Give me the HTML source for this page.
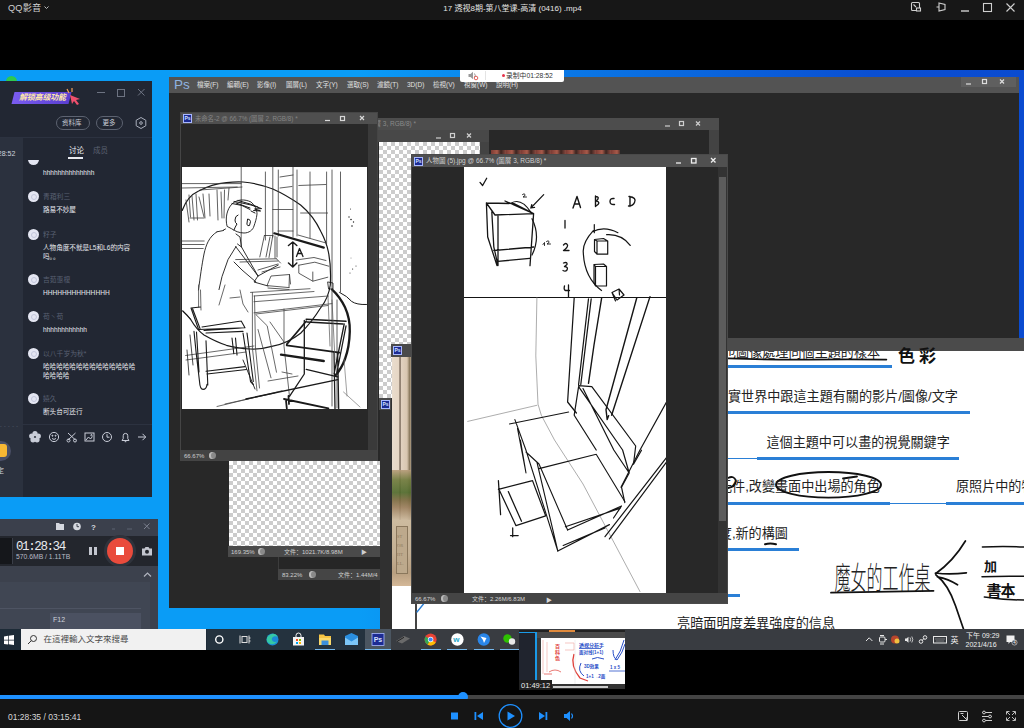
<!DOCTYPE html>
<html lang="zh">
<head>
<meta charset="utf-8">
<title>QQ影音</title>
<style>
html,body{margin:0;padding:0;background:#000;}
body{width:1024px;height:728px;overflow:hidden;position:relative;font-family:"Liberation Sans","Noto Sans CJK SC",sans-serif;}
.a{position:absolute;}
.t{position:absolute;white-space:nowrap;line-height:1;}
#top{left:0;top:0;width:1024px;height:20px;background:#171717;}
#video{left:0;top:70px;width:1024px;height:580px;background:linear-gradient(90deg,#0a9cf6 0%,#0a9cf6 35%,#0a78e6 55%,#0a4fd2 85%,#0a4bd0 100%);overflow:hidden;}
#bottom{left:0;top:699px;width:1024px;height:29px;background:#151515;}
.chk{background-color:#fff;background-image:linear-gradient(45deg,#ccc 25%,transparent 25%,transparent 75%,#ccc 75%),linear-gradient(45deg,#ccc 25%,transparent 25%,transparent 75%,#ccc 75%);background-size:8px 8px;background-position:0 0,4px 4px;}

#chat .msg{left:43px;font-size:6.600px;color:#e6e8ee;}
#chat .nm{left:43px;font-size:6.800px;color:#596072;}
#chat .av{position:absolute;left:28px;width:11px;height:11px;border-radius:50%;background:#e4e6f2;}
#chat .av:after{content:"";position:absolute;left:3px;top:3px;width:4px;height:4px;border-radius:50%;border:0.600px solid #c3c6dc;}

#ps .menu{top:5px;font-size:6.500px;color:#e0e0e0;}

#ps .sb{font-size:6px;color:#cfcfcf;}
#ps .ic{width:7px;height:7px;border-radius:50%;background:#8a8a8a;box-shadow:inset 2px 0 0 #bbb;}

.psi{position:absolute;width:9px;height:9px;background:#1c2b93;border:.6px solid #a9b8ff;box-sizing:border-box;}
.psit{font-size:5px;color:#d4e0ff;font-weight:bold;font-family:"Liberation Sans",sans-serif;}
#d4 .sb2{font-size:6px;color:#d6d6d6;}
#mm .bl{height:3px;background:#2a7fd6;}
</style>
</head>
<body>
<!-- ===== top bar ===== -->
<div id="top" class="a">
  <div class="t" style="left:8px;top:3.500px;font-size:9.200px;color:#d0d0d0;letter-spacing:0.2px;">QQ影音</div>
  <svg class="a" style="left:42.500px;top:5px" width="8" height="6"><path d="M1.500 1.500 L3.500 3.500 L5.500 1.500" fill="none" stroke="#bbb" stroke-width="1"/></svg>
  <div class="t" style="left:443px;top:4.500px;font-size:8px;color:#e4e4e4;width:139px;text-align:center;">17 透视8期-第八堂课-高清 (0416) .mp4</div>
  <svg class="a" style="left:909px;top:0" width="115" height="20" fill="none" stroke="#cfcfcf" stroke-width="1.1">
    <rect x="2.5" y="2.5" width="8" height="8" rx="1"/><rect x="7.5" y="8" width="4" height="3" fill="#1a1a1a"/><path d="M4.5 4.5l2.5 2.5"/>
    <path d="M30 3l6 1.5v5l-6 1.5z M27.5 7h2.5"/>
    <path d="M52 11h8" stroke-width="1.4"/>
    <rect x="74.500" y="3.500" width="8" height="8"/>
    <path d="M97.500 3.500l8 8M105.500 3.500l-8 8"/>
  </svg>
</div>

<!-- ===== video frame ===== -->
<div id="video" class="a">

  <!-- green icon peeking -->
  <div class="a" style="left:6px;top:6px;width:11px;height:11px;border-radius:50%;background:#2fc94e;"></div>
  <!-- ===== chat window ===== -->
  <div class="a" id="chat" style="left:0;top:11px;width:152px;height:416px;background:#222733;overflow:hidden;font-family:'Liberation Sans','Noto Sans CJK SC',sans-serif;">
    <div class="a" style="left:0;top:56px;width:152px;height:1px;background:#2c3240;"></div>
    <div class="a" style="left:0;top:57px;width:23px;height:359px;background:#2b313e;"></div>
    <!-- banner -->
    <div class="a" style="left:13px;top:11px;width:57px;height:12px;background:linear-gradient(90deg,#7a5cf0,#5a3fd0);transform:skewX(-14deg);"></div>
    <div class="t" style="left:19px;top:13px;font-size:8px;font-weight:bold;font-style:italic;color:#ffe9a8;letter-spacing:-0.2px;">解锁高级功能</div>
    <svg class="a" style="left:64px;top:6px" width="18" height="18"><path d="M3 2l2 4M8 1l0 4" stroke="#f5a05a" stroke-width="1.2"/><path d="M6 8l10 4-4 1 3 4-2 1-3-4-2 3z" fill="#f0506e"/></svg>
    <!-- window controls -->
    <svg class="a" style="left:94px;top:4px" width="56" height="16" fill="none" stroke="#6d7382" stroke-width="1"><path d="M3 7.500h8"/><rect x="23.500" y="4.500" width="7" height="7"/><path d="M44 4l6.500 6.500M50.500 4l-6.500 6.500"/></svg>
    <!-- buttons -->
    <div class="a" style="left:56px;top:35px;width:32px;height:12px;border:1px solid #5d6371;border-radius:7px;"></div>
    <div class="t" style="left:62px;top:39px;font-size:6.500px;color:#c8ccd6;">资料库</div>
    <div class="a" style="left:96px;top:35px;width:25px;height:12px;border:1px solid #5d6371;border-radius:7px;"></div>
    <div class="t" style="left:102.500px;top:39px;font-size:6.500px;color:#c8ccd6;">更多</div>
    <svg class="a" style="left:134px;top:35px" width="14" height="14" fill="none" stroke="#a9aebb" stroke-width="1"><path d="M7 1.500l4.800 2.750v5.500L7 12.500 2.200 9.750v-5.500z"/><circle cx="7" cy="7" r="1.300"/></svg>
    <!-- left col -->
    <div class="t" style="left:-8px;top:69px;font-size:7px;color:#cfd3dc;">1:28:52</div>
    <!-- tabs -->
    <div class="t" style="left:69px;top:66px;font-size:7.500px;color:#eef0f4;">讨论</div>
    <div class="a" style="left:68px;top:76px;width:15px;height:1.500px;background:#e8eaf0;"></div>
    <div class="t" style="left:93px;top:66px;font-size:7.500px;color:#5c6272;">成员</div>
    <!-- messages -->
    <div class="a" style="left:28px;top:73px;width:11px;height:11px;border-radius:50%;background:#e4e6f2;clip-path:inset(6px 0 0 0);"></div>
    <div class="t msg" style="top:89px;">hhhhhhhhhhhhhh</div>

    <div class="av" style="top:110px;"></div><div class="t nm" style="top:113px;">青葙利三</div>
    <div class="t msg" style="top:126px;">路易不妙屋</div>

    <div class="av" style="top:148px;"></div><div class="t nm" style="top:151px;">籽子</div>
    <div class="t msg" style="top:164px;">人物角度不就是L5和L6的内容</div>
    <div class="t msg" style="top:173px;">吗。。</div>

    <div class="av" style="top:193px;"></div><div class="t nm" style="top:196px;">吉茹惠榎</div>
    <div class="t msg" style="top:209px;">HHHHHHHHHHHHHH</div>

    <div class="av" style="top:230px;"></div><div class="t nm" style="top:233px;">苟丶苟</div>
    <div class="t msg" style="top:246px;">hhhhhhhhhhhh</div>

    <div class="av" style="top:267px;"></div><div class="t nm" style="top:270px;">以八千岁为秋*</div>
    <div class="t msg" style="top:283px;">哈哈哈哈哈哈哈哈哈哈哈哈哈哈</div>
    <div class="t msg" style="top:292px;">哈哈哈哈</div>

    <div class="av" style="top:312px;"></div><div class="t nm" style="top:315px;">嬉久</div>
    <div class="t msg" style="top:328px;">断头台可还行</div>

    <div class="a" style="left:22px;top:343px;width:130px;height:1px;background:#2c3240;"></div>
    <!-- toolbar icons -->
    <svg class="a" style="left:26px;top:347px" width="124" height="18" fill="none" stroke="#c9cdd8" stroke-width="1">
      <g fill="#c9cdd8" stroke="none"><circle cx="9" cy="5.500" r="2.600"/><circle cx="5.700" cy="8" r="2.600"/><circle cx="12.300" cy="8" r="2.600"/><circle cx="7" cy="11.800" r="2.600"/><circle cx="11" cy="11.800" r="2.600"/></g>
      <circle cx="28" cy="9" r="4.600"/><path d="M26 10.500q2 1.800 4 0"/><circle cx="26.400" cy="7.700" r=".5" fill="#c9cdd8"/><circle cx="29.600" cy="7.700" r=".5" fill="#c9cdd8"/>
      <path d="M42 5l7.500 7M49.500 5l-7.500 7"/><circle cx="42.500" cy="12.500" r="1.500"/><circle cx="49" cy="12.500" r="1.500"/>
      <rect x="59" y="5" width="9" height="8"/><path d="M60 12l2.500-3 2 2 2-2.500"/><circle cx="65.500" cy="7.200" r=".7"/>
      <circle cx="81" cy="9" r="4.500"/><path d="M81 6.200v3h2.500"/>
      <path d="M96 12.500h7l-1.200-1.800v-3a2.300 2.300 0 0 0-4.600 0v3z M98.700 13.700h1.600"/>
      <path d="M112 9h7.500M116.500 5.800l3.200 3.200-3.200 3.200"/>
    </svg>
    <!-- left bottom -->
    <div class="t" style="left:0;top:343px;font-size:5px;color:#5c6272;letter-spacing:.5px;">- - - - -</div>
    <div class="a" style="left:-9px;top:360px;width:20px;height:20px;border-radius:50%;background:#4a4f66;"></div>
    <div class="a" style="left:-2px;top:363px;width:9px;height:13px;border-radius:3px;background:#f7b733;"></div>
    <div class="t" style="left:-3px;top:386px;font-size:7px;color:#cfd3dc;">定</div>
  </div>


  <!-- ===== Photoshop main window ===== -->
  <div class="a" id="ps" style="left:169px;top:7px;width:850px;height:531px;background:#282828;font-family:'Liberation Sans','Noto Sans CJK TC',sans-serif;">
    <div class="a" style="left:0;top:0;width:850px;height:16px;background:#535353;"></div>
    <div class="t" style="left:5px;top:1px;font-size:13.500px;color:#8fb3e0;letter-spacing:0px;">Ps</div>
    <div class="t menu" style="left:28px;">檔案(F)</div>
    <div class="t menu" style="left:58px;">編輯(E)</div>
    <div class="t menu" style="left:88px;">影像(I)</div>
    <div class="t menu" style="left:117px;">圖層(L)</div>
    <div class="t menu" style="left:147px;">文字(Y)</div>
    <div class="t menu" style="left:178px;">選取(S)</div>
    <div class="t menu" style="left:208px;">濾鏡(T)</div>
    <div class="t menu" style="left:238px;">3D(D)</div>
    <div class="t menu" style="left:264px;">檢視(V)</div>
    <div class="t menu" style="left:295px;">視窗(W)</div>
    <div class="t menu" style="left:327px;">說明(H)</div>
    <div class="a" style="left:792px;top:0;width:55px;height:10px;background:#5f5f5f;"></div>
    <svg class="a" style="left:792px;top:0" width="55" height="10" fill="none" stroke="#ddd" stroke-width="1.200"><path d="M5 7h5"/><rect x="21.500" y="2.500" width="4" height="4"/><path d="M39 2.500l4 4M43 2.500l-4 4"/></svg>

    <!-- doc 2 (behind, wide) -->
    <div class="a" style="left:209px;top:41px;width:341px;height:12px;background:#4d4d4d;"></div>
    <div class="t" style="left:205.500px;top:44px;font-size:6.500px;color:#8a8a8a;">層 3, RGB/8) *</div>
    <div class="a" style="left:540px;top:53px;width:10px;height:30px;background:#434343;"></div>
    <svg class="a" style="left:492px;top:41px" width="50" height="12" fill="none" stroke="#cfcfcf" stroke-width="1.200"><path d="M4 8h5"/><rect x="18.500" y="3.500" width="4" height="4"/><path d="M35 3.500l4 4M39 3.500l-4 4"/></svg>
    <div class="a" style="left:322px;top:73px;width:129px;height:5px;background:repeating-linear-gradient(90deg,#7a3b34 0,#a85a4a 6px,#3a2420 10px,#8a4a40 15px);"></div>
    <!-- doc 3 (behind, small, checkerboard) -->
    <div class="a" style="left:209px;top:53px;width:111px;height:12px;background:#484848;"></div>
    <svg class="a" style="left:263px;top:53px" width="50" height="12" fill="none" stroke="#cfcfcf" stroke-width="1.200"><path d="M4 8h5"/><rect x="18.500" y="3.500" width="4" height="4"/><path d="M35 3.500l4 4M39 3.500l-4 4"/></svg>
    <div class="a chk" style="left:210px;top:65px;width:101px;height:256px;"></div>
    <div class="a" style="left:311px;top:65px;width:9px;height:20px;background:#434343;"></div>
    <!-- checkerboard below doc1 + status bars -->
    <div class="a chk" style="left:60px;top:384px;width:151px;height:85px;"></div>
    <div class="a" style="left:59px;top:469px;width:152px;height:11px;background:#4a4a4a;"></div>
    <div class="t sb" style="left:62px;top:472px;">169.35%</div>
    <div class="a ic" style="left:89px;top:471px;"></div>
    <div class="t sb" style="left:115px;top:472px;">文件：1021.7K/8.98M</div>
    <div class="t sb" style="left:192px;top:472px;font-size:6px;">▶</div>
    <div class="a" style="left:109px;top:480px;width:102px;height:13px;background:#262626;border-left:1px solid #3c3c3c;"></div>
    <div class="a" style="left:109px;top:492px;width:102px;height:11px;background:#454545;"></div>
    <div class="t sb" style="left:113px;top:495px;">83.22%</div>
    <div class="a ic" style="left:140px;top:494px;"></div>
    <div class="t sb" style="left:169px;top:495px;">文件：1.44M/4</div>
    <!-- doc 1 -->
    <div class="a" id="d1" style="left:11px;top:35px;width:198px;height:349px;background:#282828;border:1px solid #454545;box-sizing:border-box;overflow:hidden;">
      <div class="a" style="left:0;top:0;width:198px;height:11px;background:#4f4f4f;"></div>
      <div class="a psi" style="left:2px;top:1px;"></div><div class="t psit" style="left:3.500px;top:3px;">Ps</div>
      <div class="t" style="left:14px;top:3px;font-size:6.300px;color:#858585;">未命名-2 @ 66.7% (圖層 2, RGB/8) *</div>
      <svg class="a" style="left:140px;top:0" width="50" height="11" fill="none" stroke="#d8d8d8" stroke-width="1.200"><path d="M4 7.500h5"/><rect x="19.500" y="3.500" width="4" height="4"/><path d="M39 3l4 4M43 3l-4 4"/></svg>
      <div class="a" style="left:187px;top:11px;width:10px;height:326px;background:#3a3a3a;"></div>
      <div class="a" style="left:0;top:337px;width:198px;height:11px;background:#434343;"></div>
      <div class="t sb" style="left:3px;top:340px;">66.67%</div>
      <div class="a ic" style="left:28px;top:339px;"></div>
      <svg class="a" id="sk1" style="left:1px;top:54px;" width="185" height="242" viewBox="182 167 185 242"><rect x="182" y="167" width="185" height="242" fill="#fff"/>
<g fill="none" stroke="#1a1a1a" stroke-width=".9" stroke-linecap="round" stroke-linejoin="round">
<!-- big circle -->
<path d="M182.200 210.500C186 200 192 194 198.600 191 208 186 217 183.500 226.400 182.600 232 182 238 181.800 243 182 254 183 264 185.500 272.800 189 283 193.500 292 199 300.600 205 309 212 316 221 321 231.800 324.500 238.500 327 245 328.400 252 330.500 262 331 272 330.300 285 329 294 326 301 321 307.300 315 317 308 326 300.600 333.200 292 340 283 344 272.800 346.200 265 348.500 258 349.300 250.500 349 242 348.500 234 347.500 226.400 345.300 218 342.500 211 339 204 335 198.500 331 194.500 326 191 320 188 316 185 313 182.800 311" stroke-width="1.200"/>
<!-- thick arc right -->
<path d="M332.200 289.600C338 295 342 301 345 307.300 348.500 315 350 323 349.800 331.400 349.500 342 348 351 345 359 342.500 366 339 371.500 335 376" stroke-width="2.300"/>
<path d="M339.600 292.400q8 4 12 9 5 3.500 14.900 3.100" stroke-width="1"/>
<!-- shelves / window frames -->
<g stroke="#3a3a3a" stroke-width=".8">
<path d="M241.200 167v79M265.400 172v68M272.800 167v70M278.300 170v66M293 167v70M297 170v66M310 172v66M326.600 172v72M332 170v236M340.500 172v120M337 300v108"/>
<path d="M280 177l13-2M280 188l12-1.500M298.800 185.500l27-1M272.800 209.500h20M300.600 213h27M278 231h15M298 235l28 8"/>
<path d="M182.200 183.600h59M182.200 188l55-1M200 190l42-3M182.200 241h22M182.200 244.500h22M182.200 248.500h21"/>
<path d="M189 195l1.500 22M192 196l2 24M196 194l1.500 26M199 197l5 20M203 194l2 24M209 194l1 22M217 190l1 30M221 192l1 26M224.500 190l-.5 28M229 188l-1 12M190 218h14M186 200l3 22"/>
</g>
<!-- person -->
<path d="M227 226c-2-8 0-17 5-22 5-5 13-5 19-2 4 3 6 8 6 12-.5 5-2 9-3 12-1 4-5 7-10 7-5 0-9-2-12-4z"/>
<path d="M234 201.500l8 1.500 9 2 10.600 3.600-7 .4 6 2-7-.5M232 203.500l10 2 8 4M251 211l4 2M238 200.500l12 3.500 8 3M236 203l14 5" stroke-width="1"/>
<path d="M238 215q-3 1-3 5 0 3 2 4-2 3-3 6M248 219q2 0 2.500 2.500l-1 4q-2 1-2.500-1z" stroke-width="1"/>
<path d="M225.500 229l-2 1M236 234l4 3 1.500 10 16.500 29 20.300-11M241.500 247l-4-3M217 231.800c-8 5-11 13-13 22.200-2 10-4 24-5.500 36M223.500 230.500l-6.500 1.300M236 246.600l-8 13-6 17-3 13M235.700 246.600l22.300 29.400M258 276l-4 6 14 4M234 262l8 8 14 12" />
<!-- thick line + arrow + A -->
<path d="M274.300 233.300l49.500 14.300" stroke-width="2.200"/>
<path d="M292.800 242.500v24M288.500 245.500l4.300-3.500 4 3.500M288.500 263l4.300 4 4-4" stroke-width="1.500"/>
<path d="M296.500 256.500l3-8 3.500 8M297.500 253.500h4.500" stroke-width="1.300"/>
<!-- desk items -->
<g stroke="#333" stroke-width=".8">
<path d="M264.400 235.500l-4.600 21.400M272.800 235.500l-3.800 22M264.400 235.500h8.400M270 237l-4 20M275 236v22M277 237v20"/>
<path d="M235.700 259.600l40.800-.8M240 262l38-1M276.500 258.800l4 4.200M258 270l20-6M262 272l18-5"/>
<path d="M267 285.600l4-9.600 18.500-1.500 1 9.500M267 285.600l22 2M268 288l21 1.500M289.500 274.500l-.5 13"/>
<path d="M298.800 265.200l16-3 14 4M298.800 265.200v8l14 8 15-4M312.800 272v9M296 260l18-2.500 12 3"/>
<path d="M328 282l5 1v6h-4z" stroke="#111"/>
</g>
<g fill="#222" stroke="none"><circle cx="349" cy="217" r=".7"/><circle cx="351" cy="219.500" r=".8"/><circle cx="353.500" cy="222" r=".7"/><circle cx="352" cy="226" r=".8"/><circle cx="350.500" cy="209" r=".5"/><circle cx="352.600" cy="269" r=".6"/><circle cx="350" cy="273" r=".5"/><circle cx="356" cy="266" r=".5"/><circle cx="351" cy="258" r=".4"/></g>
<!-- table -->
<g stroke="#444" stroke-width=".8">
<path d="M250.500 292.400l59.500-3.700M254 296l60-4.500M254 301.700l74.400-5.700M254 312.800l78-9.200M256 314l72-8.500"/>
<path d="M252.400 292.400v55.600l4.600 42.800M254.500 296l1 52 4 40M284 309v37.200l5.500 50.100M198.600 285v22M200.500 290l.5 20"/>
<path d="M256 314.700l11.200 11.100 9.300 46.400M258 329.500l13 48.300M270 322l14 20M225 285l-6 20M240 290l3 14 5 8M230 298l10-1"/>
<path d="M185.600 355.500l68.400-9.500M186 360l60-8M217 406.500l65-15.700M225 404l50-11M268 381l30-5M282 372l10 2"/>
</g>
<!-- left chair -->
<g stroke-width="1.100">
<path d="M191 308l9.400-1M191 308l7.600 21.500M192.500 308.500l7.500 20M198.600 329.500l46.400-1.800M202 327l39.200-6M241.200 321l3.800 6.700M206 333l37-1.600M204 330.500l38-2.500"/>
<path d="M194 331.400l2 20 3.500 30q.5 8 3.500 8 3.500 0 4-5M206 340.700l1.800 44.300M196.500 332l2.500 40M243 333l7.500 48.500 2.800 3M247 333l6.300 48.500M232 338l1.800 15.700M235.500 338l1.500 17"/>
<path d="M206 371.300l39-4.700M207 374l39.500-4.500"/>
<path d="M182.800 311l8 8M190 335l3 30M187 350l2 25" stroke-width=".8"/>
<path d="M243 360l12 29" stroke-width=".9"/>
</g>
<!-- right chair -->
<g stroke-width="1.500">
<path d="M306.200 319.300l39.800 1.900M307 322l36 2" stroke-width="1.600"/>
<path d="M306.200 321.200l-19.500 23.200M286.700 345.300l52.900 7.400" stroke-width="1.700"/>
<path d="M281 354.600l42.800 6.400" stroke-width="2.300"/>
<path d="M304.300 320.300v53.700M306.200 369.400l31.500 7.500M304.300 374l-14.800 22.300" stroke-width="1.300"/>
<path d="M284 399l44.400 9.400M286 400.500l.8 7.900M288.500 396l.5 8" stroke-width="1.800"/>
<path d="M334 351.800l1 56.600M337.700 353.500l1 54.900M344.200 324l-10.200 50M346 326l-9 46" stroke-width="1.300"/>
<path d="M245.900 399l91.800-19.400" stroke-width="1.400"/>
<path d="M332 300l3 60M328 296l2 50" stroke-width=".7" stroke="#555"/>
<path d="M344 359l3 37M343.500 392l16.500 15" stroke-width=".7" stroke="#777"/>
</g>
</g></svg>
    </div>
  </div>

  <!-- ===== misc strips right of PS lower-left area ===== -->
  <div class="a" style="left:380px;top:328px;width:12px;height:231px;background:#303030;"></div>
  <div class="a" style="left:379px;top:328px;width:12px;height:12px;background:#4a4a4a;"></div>
  <div class="a psi" style="left:381px;top:330px;"></div><div class="t psit" style="left:382.500px;top:332px;">Ps</div>
  <!-- photo doc -->
  <div class="a" style="left:391px;top:274px;width:21px;height:13px;background:#4a4a4a;"></div>
  <div class="a psi" style="left:393px;top:276px;"></div><div class="t psit" style="left:394.500px;top:278px;">Ps</div>
  <div class="a" style="left:392px;top:287px;width:20px;height:229px;background:linear-gradient(90deg,#e9dccd 0,#e6d6c4 35%,#5a4a3c 40%,#e2d2c0 46%,#d8c6b0 75%,#8b7a5e 88%,#cdbba4 100%);"></div>
  <div class="a" style="left:392px;top:400px;width:20px;height:50px;background:linear-gradient(180deg,#b79c7a 0,#6e7a3c 20%,#4f6a2c 45%,#7a6a40 60%,#9b7f5d 75%,#cbb89c 100%);opacity:.9;"></div>
  <div class="a" style="left:392px;top:450px;width:20px;height:66px;background:linear-gradient(180deg,#cdbb9f 0,#c4b094 50%,#b89f80 80%,#d4b898 100%);"></div>
  <div class="a" style="left:396px;top:456px;width:12px;height:48px;background:#bda98c;border:1px solid #8a775c;box-sizing:border-box;"></div>
  <div class="a" style="left:392px;top:516px;width:20px;height:43px;background:#fff;"></div>
  <div class="t" style="left:397px;top:462px;font-size:4.500px;line-height:9px;color:#8f7b60;font-family:'Liberation Serif',serif;white-space:pre;">ST
OR
HT
LL.</div>
  <!-- ===== white mind map ===== -->
  <div class="a" id="mm" style="left:412px;top:268px;width:612px;height:291px;overflow:hidden;font-family:'Liberation Sans','Noto Sans CJK TC',sans-serif;color:#222;">
    <div class="a" style="left:0;top:266px;width:316px;height:25px;background:#fff;"></div>
    <div class="a" style="left:316px;top:13px;width:296px;height:278px;background:#fff;"></div>
    <div class="a" style="left:3px;top:266px;width:1.500px;height:25px;background:#444;"></div>
    <!-- row1 -->
    <div class="t" style="left:311px;top:7.500px;font-size:13.100px;">也圖像處理同個主題的樣本</div>
    <div class="a" style="left:316px;top:0;width:296px;height:13.400px;background:#4b4b4b;"></div>
    <div class="a bl" style="left:316px;top:27px;width:164px;"></div>
    <!-- row2 -->
    <div class="t" style="left:316px;top:51.500px;font-size:13.100px;">實世界中跟這主題有關的影片/圖像/文字</div>
    <div class="a bl" style="left:316px;top:72.500px;width:242px;"></div>
    <!-- row3 -->
    <div class="t" style="left:354.500px;top:97.500px;font-size:13.100px;">這個主題中可以畫的視覺關鍵字</div>
    <div class="a bl" style="left:345px;top:118.500px;width:202px;"></div>
    <div class="a" style="left:316px;top:119.500px;width:30px;height:1px;background:#2a7fd6;"></div>
    <!-- row4 -->
    <div class="t" style="left:307px;top:142px;font-size:13.100px;">元件,改變畫面中出場的角色</div>
    <div class="t" style="left:544px;top:142px;font-size:13.100px;">原照片中的物件</div>
    <div class="a bl" style="left:316px;top:164px;width:162px;"></div>
    <div class="a" style="left:478px;top:165px;width:56px;height:1px;background:#2a7fd6;"></div>
    <div class="a bl" style="left:534px;top:164px;width:80px;"></div>
    <!-- row5 -->
    <div class="t" style="left:306.800px;top:189px;font-size:13.100px;">度,新的構圖</div>
    <div class="a bl" style="left:316px;top:210px;width:71px;"></div>
    <div class="a bl" style="left:316px;top:255.500px;width:12px;"></div>
    <!-- bottom row -->
    <div class="t" style="left:265px;top:279px;font-size:13.200px;">亮暗面明度差異強度的信息</div>
    <svg class="a" id="mmsvg" style="left:0;top:0" width="612" height="291" viewBox="412 338 612 291" fill="none" stroke="#111" stroke-linecap="round" stroke-linejoin="round" font-family="Liberation Sans,Noto Sans CJK TC,sans-serif">
      <path d="M728 358.400q40 1.500 80 1.200t78.400 0" stroke-width="1.700"/>
      <text x="898" y="362" font-size="17" font-weight="bold" fill="#111" stroke="none" transform="translate(0 0)" textLength="38">色彩</text>
      <path d="M423.500 604l-6.500 8" stroke="#2a7fd6" stroke-width="1.300"/>
      <ellipse cx="828.500" cy="484.800" rx="52.500" ry="12.800" stroke-width="1.900"/>
      <path d="M843 478.500l14-2M728 478q6-3 8 3-1 6-8 7" stroke-width="1.800"/>
      <path d="M765 544.300q5-1.500 11 0" stroke-width="2"/>
      <text x="0" y="0" font-size="16" font-weight="300" fill="#222" stroke="none" transform="translate(834.500 589) scale(1 1.900)" textLength="96">魔女的工作桌</text>
      <path d="M831 592.700q50-1 102.500-1.900" stroke-width="1.800"/>
      <path d="M965.400 541q-12 20-29.900 32.800M935.500 573q14 2 30.900-.2M937.500 576.800q11 2 20 8M936 575q12 9 19.500 30.700t7.900 23" stroke-width="1.700"/>
      <path d="M982.400 547q20-1 42 0M982 576.800q20-1 42-.5M984.300 597q20 3 40 3" stroke-width="1.500"/>
      <text x="984" y="571" font-size="13" font-weight="bold" fill="#111" stroke="none" textLength="20">加</text>
      <text x="986.500" y="596" font-size="15" font-weight="bold" fill="#111" stroke="none" textLength="29">書本</text>
    </svg>
  </div>
  <!-- ===== doc 4 ===== -->
  <div class="a" id="d4" style="left:411px;top:84px;width:317px;height:450px;background:#282828;border:1px solid #4a4a4a;box-sizing:border-box;overflow:hidden;font-family:'Liberation Sans','Noto Sans CJK TC',sans-serif;">
    <div class="a" style="left:0;top:0;width:317px;height:12px;background:#505050;"></div>
    <div class="a psi" style="left:2px;top:1.500px;"></div><div class="t psit" style="left:3.500px;top:3.500px;">Ps</div>
    <div class="t" style="left:14px;top:3px;font-size:6.500px;color:#d0d0d0;">人物圖 (5).jpg @ 66.7% (圖層 3, RGB/8) *</div>
    <svg class="a" style="left:260px;top:0" width="55" height="12" fill="none" stroke="#eee" stroke-width="1.300"><path d="M4 8h5"/><rect x="19.500" y="3.500" width="4.500" height="4.500"/><path d="M39 3l4.500 4.500M43.500 3l-4.500 4.500"/></svg>
    <div class="a" style="left:306px;top:12px;width:9px;height:427px;background:#333;"></div>
    <div class="a" style="left:307px;top:22px;width:7px;height:344px;background:#5c5c5c;"></div>
    <div class="a" style="left:0;top:438px;width:317px;height:11px;background:#454545;"></div>
    <div class="t sb2" style="left:3px;top:441px;">66.67%</div>
    <div class="a" style="left:29px;top:440px;width:7px;height:7px;border-radius:50%;background:#8a8a8a;box-shadow:inset 2px 0 0 #bbb;"></div>
    <div class="t sb2" style="left:60px;top:441px;">文件：2.26M/6.83M</div>
    <div class="t sb2" style="left:134px;top:441.500px;font-size:6px;">▶</div>
    <svg class="a" id="sk4" style="left:52px;top:12px;" width="202" height="426" viewBox="464 167 202 426"><rect x="464" y="167" width="202" height="426" fill="#fff"/>
<g fill="none" stroke="#151515" stroke-width="1.250" stroke-linecap="round" stroke-linejoin="round">
<path d="M480 182.400l2.600 3.100 4.100-7.200" stroke-width="1.300"/>
<path d="M486.400 203l27.600.6M486.400 203l1.300 34 9.300 28.500M486.400 203l8.600 12M495 215l38.600-1.400M491.800 211.800l2 35 4.200 18.700M498 215v50.500M505 201l28.600 12.600M514 203.600l19.600 10M533.600 213.600l-3.600 52M493.800 250.500l40-3.500M498 261.400l31.700-3.100" stroke-width="1.300"/>
<path d="M511.300 203q10-5.500 19.500 9.200M532 218.700q9 18 0 36.300M543.700 194.700l-12.900 13.300M530.800 208l1-3.500M530.800 208l3.800-.6" stroke-width="1.200"/>
<path d="M522.500 194.500q2-1.500 2.500 0t-2 2.500h3.500M543 244.500l1.500-2v3M546.500 241.500q2-1.500 2.500 0t-2 2.500h3.500" stroke-width=".9"/>
<path d="M573 208l4-11.500 3.500 11M574.500 204h5M595.500 196v10.500M595.500 196.500q5 0 1 4.500 5 1.500-.5 5M614 198.500q-4-.5-4 3t4.500 3M630 196.500v10M629 196.500q8 1 5.500 6-1.500 3.500-6 3.500" stroke-width="1.400"/>
<path d="M565 220.500v7.500M563.500 245q2.500-3 4 0 .5 2.500-4 5.500h5.500M563.500 263q4-1.500 3.500 1.500l-2.500 2q4 .5 2.500 3.500-1.500 2-4 .5M564.500 286q-1 4 1 4.500h4M568.500 285v12" stroke-width="1.300"/>
<path d="M597 241h10.700v13.200H597zM597 241l-2.500-1.500 9-1 4.200 2.500M594.500 239.500v12l2.500 2.700M595.500 266.500h11v19.500h-11zM595.500 266.500l-1.500-2 9.500-.5 3 2.500M594 264.500v18l1.500 3.500M612 292.500l7-3.500 5 6-7 5zM612 292.500l3.500 8.500M619 289l.5 6" stroke-width="1.200"/>
<path d="M593.300 230.600q-11 12-10 22 1 25 18.200 37.900M592.300 231.700q12-6 25.600 1M606.600 234.700q15-1 23.600 10.700M594.300 224.500v8.200" stroke-width="1.200"/>
<path d="M464 297.500h202" stroke-width="1"/>
<path d="M536.900 297.700l-1.100 58.200 2.200 48.300 3.300 11 13.200 24.800 28.500 44 57 107.600M467.700 421.400l69.200-16.100" stroke="#8a8a8a" stroke-width=".7"/>
<path d="M574.200 297.700l-6.600 104.300 8.800 11M588.500 298.800l-9.900 85.700M591.200 298.800l-10.400 85.700"/>
<path d="M601.700 297.700l-7.700 47.300-5.500 38.400M636.800 297.700l-30.800 112 1.200 9.900 1.500-4M650 296.600l-38.400 118.600" stroke-width="1.400"/>
<path d="M578.600 385.600l13.200 1.100M578.600 386.600l44 63.400 6.600 23M591.800 386.700l43.900 59.300M635.700 446l-2.200 18.200M583 388.600l30.800 61.400 15.400 23M578.600 386.600l-4.400 28.600 22 34.800M629.200 473l-7.700 14.200 3.300 15.400M633.500 464.200l8-14" stroke-width="1.200"/>
<path d="M509.400 424l59.300-12M514.900 419.600l11 30.400 31.900 101M517.500 428.400l8.500 44.600M520.400 440l5.600 33M526 452l13 12 28.600 66M536.900 462l20.900 89M539 468.600l57.200-14.300M596.200 454.300l28.600 47.200" stroke-width="1.100"/>
<path d="M567.600 530l53.900-24M565.400 526.800l55-18.700M557.800 551l51.600-26.400M563.200 545.500l41.800-17.600M621.500 506l-8 12" stroke-width="1.200"/>
<path d="M498.400 489.400l34.100-8.800M498.400 480.600l2.200 34.100M499.500 490.500l16.500 35.200M516 525.700l29.700-9.900M532.500 480.600l13.200 35.200M508.300 491.600l13.200 29.700M512.700 527.900v8.800M510.500 535.600h7.700"/>
<path d="M666.500 402l-26.500 48-19 37.200M666.500 457.600l-61.500 79.100M666.500 462l-57.100 76.900" stroke-width="1.200"/>
</g></svg>
  </div>
  <!-- recording badge -->
  <div class="a" style="left:460px;top:-1px;width:104px;height:13px;background:#fff;border-radius:0 0 2px 2px;"></div>
  <svg class="a" style="left:467px;top:0" width="14" height="11"><path d="M1.500 4h2l2.500-2.200v7.400L3.500 7h-2z" fill="#999"/><path d="M7.500 3.500q1.500 2 0 4" stroke="#999" fill="none"/><circle cx="9" cy="8" r="1.800" fill="none" stroke="#e0504a" stroke-width=".9"/></svg>
  <div class="a" style="left:484.500px;top:1px;width:1px;height:9px;background:#e4e4e4;"></div>
  <div class="a" style="left:501.500px;top:4px;width:3px;height:3px;border-radius:50%;background:#e8334a;"></div>
  <div class="t" style="left:506px;top:2.500px;font-size:6.800px;color:#333;">录制中01:28:52</div>
  <!-- ===== recorder window ===== -->
  <div class="a" id="rec" style="left:0;top:449px;width:158px;height:110px;background:#3b404c;overflow:hidden;">
    <svg class="a" style="left:52px;top:0" width="106" height="16" fill="#d5d8df">
      <path d="M4 4h3l1 1h4v6h-8z"/>
      <circle cx="25" cy="7.500" r="3.800"/><path d="M25 5v2.700h2" stroke="#3b404c" fill="none"/>
      <text x="39" y="10.500" font-size="8" font-weight="bold" font-family="Liberation Sans,sans-serif">?</text>
      <path d="M60 10h3M75 10h5" stroke="#5d6270"/><path d="M92 4.500l5.500 5.500M97.500 4.500l-5.500 5.500" stroke="#7d8290" fill="none"/>
    </svg>
    <div class="a" style="left:0;top:17px;width:158px;height:30px;background:#23262d;"></div>
    <div class="a" style="left:0;top:19px;width:12px;height:26px;background:#15171b;border-right:1px solid #3a3e48;"></div>
    <div class="t" style="left:16px;top:22px;font-size:12.500px;color:#e8eaee;font-family:'Liberation Mono',monospace;letter-spacing:-1.400px;">01:28:34</div>
    <div class="t" style="left:16px;top:35px;font-size:6.800px;color:#b7bbc6;">570.6MB / 1.11TB</div>
    <div class="a" style="left:89px;top:28px;width:2.500px;height:8px;background:#c3c6cf;"></div>
    <div class="a" style="left:94px;top:28px;width:2.500px;height:8px;background:#c3c6cf;"></div>
    <div class="a" style="left:104px;top:16px;width:32px;height:32px;border-radius:50%;background:#2f333c;"></div>
    <div class="a" style="left:107px;top:19px;width:26px;height:26px;border-radius:50%;background:#e94b3c;"></div>
    <div class="a" style="left:116px;top:28px;width:8px;height:8px;background:#fff;"></div>
    <svg class="a" style="left:141px;top:27px" width="12" height="10" fill="#c3c6cf"><path d="M1 2.500h2.500l1-1.500h3l1 1.500H11v7H1z"/><circle cx="6" cy="5.800" r="2" fill="#23262d"/></svg>
    <div class="a" style="left:0;top:47px;width:158px;height:63px;background:#3c414d;"></div>
    <svg class="a" style="left:143px;top:52px" width="9" height="7" fill="none" stroke="#b0b4bf" stroke-width="1.200"><path d="M1 5.500l3.500-3.500 3.500 3.500"/></svg>
    <div class="a" style="left:0;top:63px;width:150px;height:47px;background:#404653;"></div>
    <div class="a" style="left:0;top:89px;width:141px;height:1px;background:#4e5463;"></div>
    <div class="a" style="left:50px;top:94px;width:91px;height:16px;background:#4b5161;"></div>
    <div class="t" style="left:53px;top:97px;font-size:7px;color:#cfd3dc;">F12</div>
  </div>
  <!-- ===== taskbar ===== -->
  <div class="a" id="tb" style="left:0;top:559px;width:1024px;height:21px;background:#1d2b37;">
    <svg class="a" style="left:4px;top:6px" width="10" height="10" fill="#fff"><path d="M0 1.400l4-.6v4H0zM4.700.7L10 0v4.800H4.700zM0 5.500h4v4l-4-.6zM4.700 5.500H10V10l-5.300-.7z"/></svg>
    <div class="a" style="left:21px;top:0;width:185px;height:21px;background:#f1f1f1;"></div>
    <svg class="a" style="left:27px;top:5px" width="11" height="11" fill="none" stroke="#333" stroke-width="1"><circle cx="6.500" cy="4.500" r="3"/><path d="M4.300 6.700L1 10"/></svg>
    <div class="t" style="left:43.500px;top:6px;font-size:8.500px;color:#4a4a4a;font-family:'Liberation Sans','Noto Sans CJK TC',sans-serif;">在這裡輸入文字來搜尋</div>

    <div class="a" style="left:207px;top:0;width:183px;height:21px;background:#24323e;"></div>
    <div class="a" style="left:390px;top:0;width:634px;height:21px;background:#393c41;"></div>
    <div class="a" style="left:365px;top:0;width:26px;height:21px;background:#4b5661;"></div>
    <svg class="a" style="left:207px;top:0" width="320" height="21" font-family="Liberation Sans,sans-serif">
      <circle cx="12.300" cy="10.500" r="3.600" fill="none" stroke="#fff" stroke-width="1.400"/>
      <g fill="none" stroke="#ddd" stroke-width="1"><rect x="35" y="7.500" width="5" height="6"/><path d="M33 6.500v8M42 6.500v8M42 9h1.500M42 12h1.500"/></g>
      <circle cx="65.500" cy="10.500" r="6" fill="#1b8ad6"/><path d="M60 12.500a6 6 0 0 1 11-4.500c-3-2-7 0-6 3 .6 2 3 2.500 5 1.500a6 6 0 0 1-10 0z" fill="#35c8a4"/>
      <path d="M86 8h11v8.500H86z" fill="#f3f3f3"/><path d="M89 8V6.500a2.500 2.500 0 0 1 5 0V8" fill="none" stroke="#f3f3f3" stroke-width="1"/><rect x="89" y="10" width="2" height="2" fill="#f25022"/><rect x="92" y="10" width="2" height="2" fill="#7fba00"/><rect x="89" y="13" width="2" height="2" fill="#00a4ef"/><rect x="92" y="13" width="2" height="2" fill="#ffb900"/>
      <path d="M112 5.500h5l1 1.500h6v9h-12z" fill="#f6c544"/><rect x="112" y="9" width="12" height="7" fill="#fbd96a"/><rect x="114.500" y="11.500" width="7" height="4.500" fill="#3b8fdc"/>
      <path d="M138 7l6.500-3 6.500 3v9h-13z" fill="#2a8fe0"/><path d="M138 8.500l6.500 4 6.500-4v7.500h-13z" fill="#7cc6f7"/>
      <rect x="165" y="4.500" width="12" height="12" fill="#1c2b93" stroke="#a9b8ff" stroke-width=".8"/><text x="166.700" y="13.200" font-size="7" font-weight="bold" fill="#d4e0ff">Ps</text>
      <path d="M189 12l8-5 6 2.500-8 5z" fill="#6a6a6a"/><path d="M190 12.500l7-4.200" stroke="#222" stroke-width="1"/>
      <circle cx="223.600" cy="10.500" r="6" fill="#e94335"/><path d="M223.600 10.500L218.400 7.500a6 6 0 0 0 2.200 8.200z" fill="#34a853"/><path d="M223.600 10.500l-3 5.200a6 6 0 0 0 8.200-2.200z" fill="#fbbc05"/><circle cx="223.600" cy="10.500" r="2.700" fill="#fff"/><circle cx="223.600" cy="10.500" r="2.100" fill="#4285f4"/>
      <circle cx="250.400" cy="10.500" r="6.200" fill="#fff"/><text x="246.300" y="13.200" font-size="8" font-weight="bold" fill="#2aa7c9">w</text>
      <circle cx="276.800" cy="10.500" r="6.200" fill="#2a86e8"/><path d="M273.500 7.500l6 1.500-2.500 5-1-3z" fill="#fff"/>
      <circle cx="300.500" cy="9.500" r="4.200" fill="#2dc100"/><circle cx="305" cy="12.500" r="3.200" fill="#e8e8e8"/>
      <g fill="#76b9ed"><rect x="108" y="20" width="20" height="1"/><rect x="158" y="20" width="26" height="1"/><rect x="214" y="20" width="20" height="1"/><rect x="240" y="20" width="20" height="1"/><rect x="267" y="20" width="20" height="1"/><rect x="293" y="20" width="20" height="1"/></g>
    </svg>
    <svg class="a" style="left:860px;top:0" width="164" height="21" fill="none" stroke="#e6e6e6" stroke-width="1" font-family="Liberation Sans,sans-serif">
      <path d="M6 12l3.200-3.200 3.200 3.200"/>
      <rect x="19.500" y="8" width="5.500" height="5" rx="1"/><path d="M20 6.500h4M20 15h4M25 10.500h2"/>
      <circle cx="35" cy="10.500" r="4" fill="#b8452c" stroke="none"/><circle cx="37" cy="12" r="2.500" fill="#f0c040" stroke="none"/>
      <path d="M45 9.500h1.500l2-1.800v6l-2-1.800H45z" fill="#e6e6e6" stroke="none"/><path d="M50 8.500q1.300 2 0 4M51.800 7.500q2 3 0 6" stroke-width=".8"/>
      <circle cx="61" cy="12.500" r="1.800"/><circle cx="65" cy="8.500" r="1.800"/><path d="M62 11.500l2-2"/>
      <rect x="73.500" y="7.500" width="13" height="6.500"/><path d="M75.500 10h9M76.500 12h7" stroke-width=".7" stroke-dasharray="1 1"/>
      <text x="90.500" y="13.500" font-size="8" fill="#f0f0f0" stroke="none" font-family="Liberation Sans,Noto Sans CJK TC,sans-serif">英</text>
      <text x="106" y="9" font-size="7" fill="#f0f0f0" stroke="none" font-family="Liberation Sans,Noto Sans CJK TC,sans-serif">下午 09:29</text>
      <text x="105.500" y="18" font-size="7" fill="#f0f0f0" stroke="none">2021/4/16</text>
      <path d="M146.500 6.500h8v6.500h-4.500l-1.500 2v-2h-2z" fill="#f0f0f0" stroke="none"/><circle cx="154.500" cy="13.500" r="2.600" fill="#393c41" stroke="#e6e6e6" stroke-width=".6"/><text x="153.300" y="15.300" font-size="4.500" fill="#fff" stroke="none">4</text>
    </svg>
  </div>
</div>


<!-- ===== hover thumbnail ===== -->
<div class="a" style="left:519px;top:630px;width:106px;height:59px;background:#111;overflow:hidden;">
  <div class="a" style="left:0;top:0;width:106px;height:2px;background:#222;"></div>
  <div class="a" style="left:30px;top:0;width:26px;height:1.500px;background:#e08a3c;"></div>
  <div class="a" style="left:0;top:2px;width:18px;height:55px;background:#1a9ae8;"></div>
  <div class="a" style="left:0;top:3px;width:16px;height:50px;background:#20242e;"></div>
  <div class="a" style="left:18px;top:2px;width:4px;height:55px;background:#3a3a3a;"></div>
  <div class="a" style="left:22px;top:8px;width:84px;height:46px;background:#fff;"></div>
  <div class="a" style="left:18px;top:2px;width:88px;height:6px;background:#4a4a4a;"></div>
  <svg class="a" style="left:22px;top:8px" width="84" height="46" fill="none" font-family="Liberation Sans,Noto Sans CJK SC,sans-serif">
    <text x="14" y="10" font-size="5" fill="#e0403a" font-weight="bold">百</text><text x="14" y="16" font-size="5" fill="#e0403a" font-weight="bold">科</text><text x="14" y="22" font-size="5" fill="#e0403a" font-weight="bold">色</text>
    <path d="M24 5h9v7h-9M2 2v34M6 4v30" stroke="#f2b0aa" stroke-width=".7"/>
    <path d="M33 16q-4 12 6 24l8 3" stroke="#e0403a" stroke-width="1.300"/>
    <text x="38" y="9" font-size="5" fill="#2a50c8" font-weight="bold">透视分析手</text><path d="M38 10.500h22" stroke="#2a50c8" stroke-width=".8"/>
    <text x="38" y="16" font-size="4.500" fill="#2a50c8" font-weight="bold">面对线(1+1)</text>
    <path d="M40 25q-4 8 3 13M51 21q5-3 12 0" stroke="#2a50c8" stroke-width="1"/>
    <text x="43" y="30" font-size="4.500" fill="#2a50c8" font-weight="bold">3D效果</text><text x="45" y="40" font-size="4.500" fill="#2a50c8" font-weight="bold">1+1→2面</text>
    <path d="M74 22q6-8 9-20M76 22q6-8 8-16M72 12q0 8 4 10" stroke="#2a50c8" stroke-width="1"/><text x="69" y="31" font-size="4.500" fill="#2a50c8" font-weight="bold">1 x 5</text><path d="M68 33h16" stroke="#2a50c8" stroke-width=".8"/>
    <path d="M3 36h8M8 34q6-4 12 0" stroke="#e0403a" stroke-width=".7"/>
    <path d="M34 2v44" stroke="#ddd" stroke-width=".5"/>
  </svg>
  <div class="a" style="left:22px;top:54px;width:84px;height:5px;background:#333;"></div>
  <div class="a" style="left:34px;top:55.500px;width:55px;height:2px;background:#ccc;"></div>
</div>
<div class="a" style="left:519px;top:680px;width:33px;height:10px;background:#1f1f1f;"></div>
<div class="t" style="left:521px;top:681.500px;font-size:7.500px;color:#eee;">01:49:12</div>
<!-- ===== progress + controls ===== -->
<div class="a" style="left:0;top:695px;width:1024px;height:4.500px;background:#444;"></div>
<div class="a" style="left:0;top:695px;width:462px;height:4.500px;background:#1e90ff;"></div>
<div class="a" style="left:458px;top:692px;width:10px;height:10px;border-radius:50%;background:#1e90ff;"></div>
<div id="bottom" class="a">
  <div class="t" style="left:8px;top:14px;font-size:8.5px;color:#d8d8d8;">01:28:35 / 03:15:41</div>

  <svg class="a" style="left:440px;top:2px" width="140" height="27" fill="#1e90ff">
    <rect x="11" y="11.500" width="7" height="7"/>
    <path d="M34.500 11v8h1.800v-8zM43 11v8l-6-4z"/>
    <circle cx="70.500" cy="15" r="11.300" fill="none" stroke="#1e90ff" stroke-width="1.300"/><path d="M67.500 10.500v9l7.500-4.500z"/>
    <path d="M99 11v8l6-4zM105.500 11v8h1.800v-8z"/>
    <path d="M124 13h2.500l3.500-3v10l-3.500-3H124z"/><path d="M131.500 12.500q2 2.500 0 5" fill="none" stroke="#1e90ff" stroke-width="1.200"/>
  </svg>
  <svg class="a" style="left:955px;top:10px" width="66" height="16" fill="none" stroke="#cfcfcf" stroke-width="1">
    <rect x="3.500" y="2.500" width="9" height="9" rx="1"/><path d="M7 6l5 5M12 8v3.500H8.500" /><path d="M5.500 4.500h3" />
    <path d="M27 3.500h10M27 7.500h10M27 11.500h10"/><circle cx="29" cy="3.500" r="1.400" fill="#151515"/><circle cx="35" cy="7.500" r="1.400" fill="#151515"/><circle cx="29" cy="11.500" r="1.400" fill="#151515"/>
    <path d="M51.500 5.500v-3h3M57.500 2.500h3v3M60.500 8.500v3h-3M54.500 11.500h-3v-3M52 3l3 3M60 3l-3 3M60 11l-3-3M52 11l3-3" stroke-width=".9"/>
  </svg>
</div>
</body>
</html>
